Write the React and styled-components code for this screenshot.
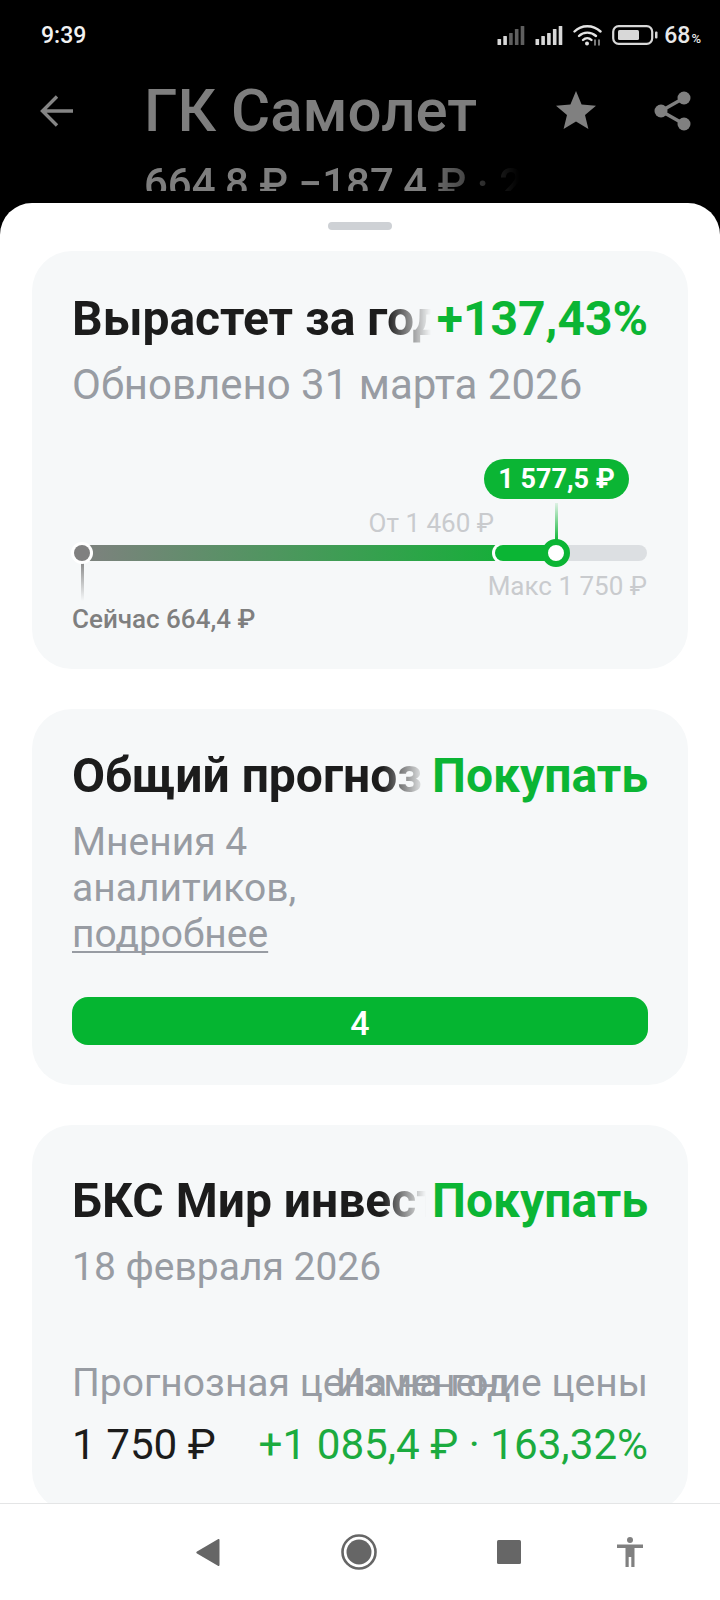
import styled, { createGlobalStyle } from "styled-components";

const GREEN = "#0bb534";
const GREY_TEXT = "#989ca3";

const GlobalStyle = createGlobalStyle`
  html, body {
    margin: 0;
    padding: 0;
    background: #000;
  }
  * {
    box-sizing: border-box;
  }
`;

const Screen = styled.div`
  display: flex;
  flex-direction: column;
  width: 720px;
  height: 1600px;
  overflow: hidden;
  background: #000;
  font-family: Roboto, "Noto Sans", sans-serif;
`;

const StatusBar = styled.div`
  display: flex;
  align-items: center;
  justify-content: space-between;
  height: 70px;
  padding: 0 19px 0 41px;
  color: #eee;
`;

const Time = styled.span`
  font-size: 23px;
  font-weight: 500;
  color: #f2f2f2;
`;

const StatusIcons = styled.div`
  display: flex;
  align-items: center;
  gap: 10px;
`;

const Percent = styled.span`
  margin-left: -4px;
  font-size: 23px;
  font-weight: 500;
  color: #e8e8e8;

  small {
    font-size: 13px;
    margin-left: 1px;
  }
`;

const Header = styled.div`
  display: flex;
  height: 121px;
  padding-left: 40px;
  overflow: hidden;
  color: #7e7e7e;
`;

const BackSlot = styled.div`
  width: 104px;
  padding-top: 25px;
`;

const TitleBlock = styled.div`
  width: 383px;
`;

const StockName = styled.div`
  font-size: 60px;
  font-weight: 500;
  line-height: 68px;
  white-space: nowrap;
  margin-top: 7px;
`;

const StockPrice = styled.div`
  font-size: 42px;
  font-weight: 500;
  line-height: 50px;
  white-space: nowrap;
  margin-top: 14px;
  -webkit-mask-image: linear-gradient(to right, #000 72%, transparent 98%);
  mask-image: linear-gradient(to right, #000 72%, transparent 98%);
`;

const HeaderActions = styled.div`
  display: flex;
  gap: 58px;
  margin-left: 29px;
  padding-top: 21px;
  align-items: flex-start;
`;

const Sheet = styled.div`
  flex: 1;
  display: flex;
  flex-direction: column;
  min-height: 0;
  margin-top: 12px;
  background: #fff;
  border-radius: 32px 32px 0 0;
  overflow: hidden;
`;

const Handle = styled.div`
  align-self: center;
  flex: none;
  width: 64px;
  height: 8px;
  margin-top: 19px;
  border-radius: 4px;
  background: #ced1d5;
`;

const CardList = styled.div`
  flex: 1;
  min-height: 0;
  display: flex;
  flex-direction: column;
  gap: 40px;
  padding: 21px 32px 0;
  overflow: hidden;
`;

const Card = styled.section`
  flex: none;
  height: ${(p) => p.$height}px;
  padding: ${(p) => p.$top}px 40px 0;
  border-radius: 40px;
  background: #f6f8f9;
`;

const CardTop = styled.div`
  display: flex;
`;

const CardTitle = styled.div`
  flex: 1;
  min-width: 0;
  margin-right: 6px;
  overflow: hidden;
  white-space: nowrap;
  font-size: 48px;
  font-weight: 700;
  line-height: 52px;
  color: #1c1c1c;
  -webkit-mask-image: linear-gradient(to right, #000 calc(100% - 44px), transparent 100%);
  mask-image: linear-gradient(to right, #000 calc(100% - 44px), transparent 100%);
`;

const CardValue = styled.div`
  flex: none;
  font-size: 48px;
  font-weight: 700;
  line-height: 52px;
  color: ${GREEN};
`;

const Muted = styled.div`
  width: ${(p) => p.$width || "auto"};
  margin-top: 17px;
  font-size: ${(p) => p.$size || 39}px;
  line-height: 46px;
  color: ${GREY_TEXT};

  u {
    text-underline-offset: 4px;
    text-decoration-thickness: 2px;
    text-decoration-skip-ink: none;
  }
`;

const Range = styled.div`
  position: relative;
  height: 185px;
  margin-top: 47px;
`;

const Track = styled.div`
  position: absolute;
  top: 90px;
  left: 2px;
  right: 1px;
  display: flex;
  height: 16px;
  border-radius: 8px;
  overflow: hidden;
  background: #dcdfe2;
`;

const TrackSpread = styled.div`
  width: 425px;
  background: linear-gradient(to right, #808080, #17ae3a);
`;

const TrackTarget = styled.div`
  width: 62px;
  margin-left: -4px;
  border-radius: 8px 0 0 8px;
  box-shadow: 0 0 0 3px #fff;
  background: ${GREEN};
`;

const StartDot = styled.div`
  position: absolute;
  top: 90px;
  left: 2px;
  width: 16px;
  height: 16px;
  border-radius: 50%;
  background: #808080;
  box-shadow: 0 0 0 3px #fff;
`;

const StartStem = styled.div`
  position: absolute;
  top: 104px;
  left: 9px;
  width: 3px;
  height: 42px;
  background: linear-gradient(to bottom, #808080, rgba(128, 128, 128, 0));
`;

const Knob = styled.div`
  position: absolute;
  top: 84px;
  left: 470px;
  width: 28px;
  height: 28px;
  border: 6px solid ${GREEN};
  border-radius: 50%;
  background: #fff;
`;

const KnobStem = styled.div`
  position: absolute;
  top: 48px;
  left: 483px;
  width: 3px;
  height: 38px;
  background: linear-gradient(to bottom, rgba(11, 181, 52, 0.1), ${GREEN});
`;

const Bubble = styled.div`
  position: absolute;
  top: 4px;
  left: 412px;
  width: 145px;
  height: 40px;
  border-radius: 20px;
  background: ${GREEN};
  color: #fff;
  font-size: 27px;
  font-weight: 700;
  line-height: 40px;
  text-align: center;
  white-space: nowrap;
`;

const RangeLabel = styled.div`
  position: absolute;
  top: ${(p) => p.$top}px;
  left: ${(p) => (p.$left === undefined ? "auto" : `${p.$left}px`)};
  right: ${(p) => (p.$right === undefined ? "auto" : `${p.$right}px`)};
  font-size: 26px;
  font-weight: ${(p) => p.$weight || 400};
  line-height: 30px;
  white-space: nowrap;
  color: ${(p) => p.$color || "#c9cbce"};
`;

const CountBar = styled.div`
  height: 48px;
  margin-top: 40px;
  border-radius: 16px;
  background: #05b531;
  color: #fff;
  font-size: 34px;
  font-weight: 500;
  line-height: 52px;
  text-align: center;
`;

const Figures = styled.div`
  display: grid;
  grid-template-columns: 1fr auto;
  margin-top: ${(p) => p.$top}px;
  white-space: nowrap;
`;

const FigureLabel = styled.div`
  min-width: 0;
  font-size: 39px;
  line-height: 46px;
  color: ${GREY_TEXT};
`;

const FigureValue = styled.div`
  min-width: 0;
  font-size: 42.2px;
  line-height: 48px;
  color: ${(p) => p.$color};
`;

const BottomNav = styled.nav`
  flex: none;
  display: flex;
  align-items: center;
  height: 97px;
  padding-left: 196px;
  background: #fff;
  border-top: 1px solid #e4e5e6;
  color: #666;
`;

const NavItem = styled.div`
  display: flex;
  margin-left: ${(p) => p.$gap}px;
`;

function Signal({ dim }) {
  const bars = [6, 9, 12, 16, 19];
  return (
    <svg width="28" height="20" viewBox="0 0 28 20">
      {bars.map((h, i) => (
        <rect
          key={h}
          x={i * 5.8 + 0.5}
          y={20 - h}
          width="3.6"
          height={h}
          rx="0.6"
          fill={dim && i > 1 ? "#5f5f5f" : "#d8d8d8"}
        />
      ))}
    </svg>
  );
}

function Wifi() {
  return (
    <svg width="29" height="22" viewBox="0 0 29 22" fill="none" stroke="#e4e4e4" strokeLinecap="round">
      <path d="M1.5 7.5C8.5 0.5 20 0.5 27.5 7.5" strokeWidth="2.4" />
      <path d="M6 12C10.5 7.5 18 7.5 23 12" strokeWidth="2.4" />
      <path d="M10 16C12.5 13.5 16 13.5 18.5 16" strokeWidth="2.4" />
      <circle cx="14" cy="19.5" r="2" fill="#e4e4e4" stroke="none" />
      <path d="M22 16v5M26 16v5" strokeWidth="1.4" stroke="#aaa" />
    </svg>
  );
}

function Battery() {
  return (
    <svg width="46" height="20" viewBox="0 0 46 20">
      <rect x="1.2" y="1.2" width="39" height="17.6" rx="5.5" fill="none" stroke="#d8d8d8" strokeWidth="2.2" />
      <rect x="6" y="5" width="21" height="10" rx="1.5" fill="#d8d8d8" />
      <rect x="43" y="6.5" width="2.5" height="7" rx="1" fill="#d8d8d8" />
    </svg>
  );
}

function BackArrow() {
  return (
    <svg width="34" height="32" viewBox="0 0 34 32" fill="none" stroke="#858585" strokeWidth="3.4">
      <path d="M33 16H3M17 1.500L2.500 16L17 30.500" />
    </svg>
  );
}

function Star() {
  return (
    <svg width="40" height="38" viewBox="0 0 40 38">
      <path d="M20 0l5.600 13.600 14.400 1.100-11 9.400 3.400 13.900L20 30.600 7.600 38 11 24.100 0 14.700l14.400-1.100z" fill="#808080" />
    </svg>
  );
}

function Share() {
  return (
    <svg width="37" height="40" viewBox="0 0 37 40" fill="#808080" stroke="#808080">
      <path d="M30 7L7 20L30 33" fill="none" strokeWidth="3.4" />
      <circle cx="30" cy="7" r="6.500" stroke="none" />
      <circle cx="7" cy="20" r="6.500" stroke="none" />
      <circle cx="30" cy="33" r="6.500" stroke="none" />
    </svg>
  );
}

export default function App() {
  return (
    <>
      <GlobalStyle />
      <Screen>
        <StatusBar>
          <Time>9:39</Time>
          <StatusIcons>
            <Signal dim />
            <Signal />
            <Wifi />
            <Battery />
            <Percent>
              68<small>%</small>
            </Percent>
          </StatusIcons>
        </StatusBar>

        <Header>
          <BackSlot>
            <BackArrow />
          </BackSlot>
          <TitleBlock>
            <StockName>ГК Самолет</StockName>
            <StockPrice>664,8 ₽ −187,4 ₽ · 2</StockPrice>
          </TitleBlock>
          <HeaderActions>
            <Star />
            <Share />
          </HeaderActions>
        </Header>

        <Sheet>
          <Handle />
          <CardList>
            <Card $height={418} $top={42}>
              <CardTop>
                <CardTitle>Вырастет за год</CardTitle>
                <CardValue>+137,43%</CardValue>
              </CardTop>
              <Muted $size={42}>Обновлено 31 марта 2026</Muted>
              <Range>
                <Track>
                  <TrackSpread />
                  <TrackTarget />
                </Track>
                <StartStem />
                <StartDot />
                <KnobStem />
                <Knob />
                <Bubble>1 577,5 ₽</Bubble>
                <RangeLabel $top={53} $right={1 + 153}>От 1 460 ₽</RangeLabel>
                <RangeLabel $top={116} $right={1}>Макс 1 750 ₽</RangeLabel>
                <RangeLabel $top={149} $left={0} $weight={500} $color="#7f7f7f">
                  Сейчас 664,4 ₽
                </RangeLabel>
              </Range>
            </Card>

            <Card $height={376} $top={41}>
              <CardTop>
                <CardTitle>Общий прогноз</CardTitle>
                <CardValue>Покупать</CardValue>
              </CardTop>
              <Muted $width="260px">
                Мнения 4 аналитиков, <u>подробнее</u>
              </Muted>
              <CountBar>4</CountBar>
            </Card>

            <Card $height={386} $top={50}>
              <CardTop>
                <CardTitle>БКС Мир инвестиции</CardTitle>
                <CardValue>Покупать</CardValue>
              </CardTop>
              <Muted>18 февраля 2026</Muted>
              <Figures $top={70}>
                <FigureLabel>Прогнозная цена на год</FigureLabel>
                <FigureLabel>Изменение цены</FigureLabel>
              </Figures>
              <Figures $top={15}>
                <FigureValue $color="#1c1c1c">1 750 ₽</FigureValue>
                <FigureValue $color="#1bab3f">+1 085,4 ₽ · 163,32%</FigureValue>
              </Figures>
            </Card>
          </CardList>

          <BottomNav>
            <NavItem $gap={0}>
              <svg width="24" height="27" viewBox="0 0 24 27">
                <path d="M23.500 1v25a1 1 0 0 1-1.600.800L1 14.600a1.400 1.400 0 0 1 0-2.200L21.900.200a1 1 0 0 1 1.600.800z" fill="#666" />
              </svg>
            </NavItem>
            <NavItem $gap={121}>
              <svg width="36" height="36" viewBox="0 0 36 36">
                <circle cx="18" cy="18" r="16.500" fill="none" stroke="#666" strokeWidth="2.600" />
                <circle cx="18" cy="18" r="12.500" fill="#666" />
              </svg>
            </NavItem>
            <NavItem $gap={120}>
              <svg width="24" height="24" viewBox="0 0 24 24">
                <rect width="24" height="24" rx="1.500" fill="#666" />
              </svg>
            </NavItem>
            <NavItem $gap={96}>
              <svg width="26" height="30" viewBox="0 0 26 30">
                <circle cx="13" cy="3" r="3" fill="#808080" />
                <path d="M0 7.500h26v3.500h-8.500v19h-3.200v-10h-2.600v10H8.500V11H0z" fill="#808080" />
              </svg>
            </NavItem>
          </BottomNav>
        </Sheet>
      </Screen>
    </>
  );
}
